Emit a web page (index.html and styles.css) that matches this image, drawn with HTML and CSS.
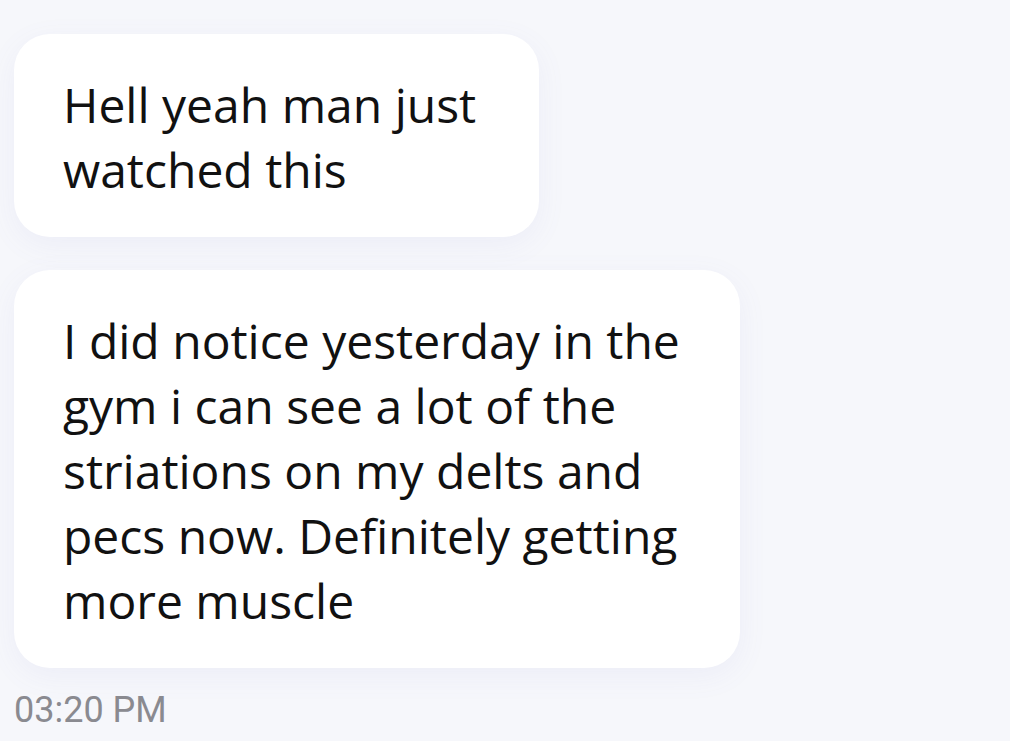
FILE: index.html
```html
<!DOCTYPE html>
<html>
<head>
<meta charset="utf-8">
<link rel="stylesheet" href="styles.css">
</head>
<body>
<div class="chat">
  <div class="bubble b1">Hell yeah man just watched this</div>
  <div class="bubble b2">I did notice yesterday in the gym i can see a lot of the striations on my delts and pecs now. Definitely getting more muscle</div>
  <div class="time">03:20 PM</div>
</div>
</body>
</html>
```
FILE: styles.css
```css
html, body {
  margin: 0;
  padding: 0;
  background: #f6f7fb;
  width: 1010px;
  height: 741px;
  overflow: hidden;
}
.chat {
  display: flex;
  flex-direction: column;
  align-items: flex-start;
  padding: 34px 0 0 14px;
}
.bubble {
  background: #ffffff;
  border-radius: 36px;
  box-sizing: border-box;
  padding: 38px 30px 34px 49px;
  font-family: "Open Sans", "Noto Sans", sans-serif;
  font-size: 48px;
  line-height: 65px;
  color: #111;
  box-shadow: 0 8px 30px rgba(110, 110, 200, 0.07);
}
.b1 { width: 525px; height: 203px; }
.b2 { width: 726px; height: 398px; margin-top: 33px; }
.time {
  margin-top: 22px;
  font-family: "Roboto", "Liberation Sans", sans-serif;
  font-size: 36px;
  color: #8a8a90;
  line-height: 40px;
}
```
